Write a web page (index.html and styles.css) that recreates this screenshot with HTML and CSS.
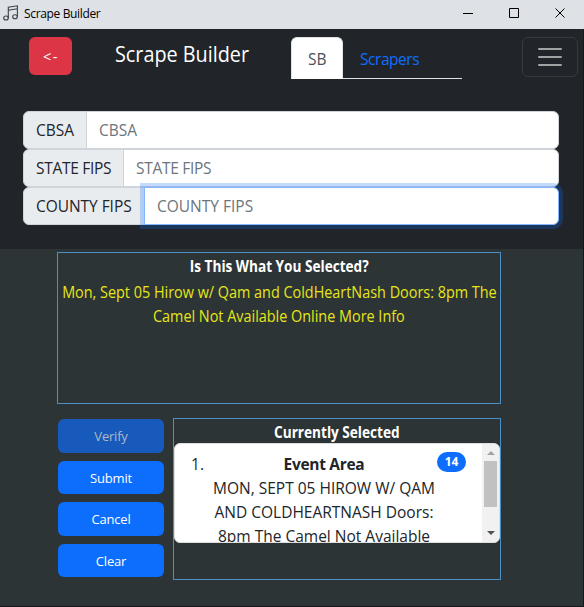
FILE: index.html
```html
<!DOCTYPE html>
<html lang="en">
<head>
<meta charset="utf-8">
<title>Scrape Builder</title>
<link rel="stylesheet" href="styles.css">
</head>
<body>
<div class="window">
  <header class="titlebar">
    <svg class="app-icon" width="16" height="16" viewBox="0 0 16 16" fill="none" stroke="#3c4043" stroke-width="1.1"><ellipse cx="3" cy="13" rx="2.3" ry="2"/><ellipse cx="12" cy="11.8" rx="2.3" ry="2"/><path d="M5.3 13V2.2L14.4.8v11M5.3 5.2l9.1-1.5"/></svg>
    <span class="app-name">Scrape Builder</span>
    <svg class="controls" width="104" height="11" viewBox="0 0 104 11" fill="none" stroke="#000"><path d="M0 5.5h10M46.500 .5h9v9h-9zM92.500 .5l9 9M101.500 .5l-9 9"/></svg>
  </header>
  <nav class="navbar">
    <button class="back"><span>&lt;-</span></button>
    <h1 class="brand"><span>Scrape Builder</span></h1>
    <div class="tabs"><a class="tab active"><span>SB</span></a><a class="tab scrapers"><span>Scrapers</span></a></div>
    <button class="toggler" aria-label="Menu"><svg width="30" height="30" viewBox="0 0 30 30" stroke="#a1a2a3" stroke-width="2" stroke-linecap="round"><path d="M4 7h22M4 15h22M4 23h22"/></svg></button>
  </nav>
  <form class="fields">
    <div class="group"><label class="cbsa">CBSA</label><div class="input">CBSA</div></div>
    <div class="group"><label class="state">STATE FIPS</label><div class="input state-input">STATE FIPS</div></div>
    <div class="group"><label class="county">COUNTY FIPS</label><div class="input focused">COUNTY FIPS</div></div>
  </form>
  <main class="content">
    <section class="preview">
      <h2><span class="question">Is This What You Selected?</span></h2>
      <p><span class="line">Mon, Sept 05 Hirow w/ Qam and ColdHeartNash Doors: 8pm The</span></p>
      <p><span class="line">Camel Not Available Online More Info</span></p>
    </section>
    <div class="lower">
      <div class="actions">
        <button disabled>Verify</button>
        <button>Submit</button>
        <button>Cancel</button>
        <button>Clear</button>
      </div>
      <section class="selected">
        <h2><span class="question">Currently Selected</span></h2>
        <div class="list">
          <div class="number">1.</div>
          <div class="item">
            <div class="item-title">Event Area</div>
            <div>MON, SEPT 05 HIROW W/ QAM</div>
            <div>AND COLDHEARTNASH Doors:</div>
            <div>8pm The Camel Not Available</div>
          </div>
          <div class="badge">14</div>
          <div class="scrollbar"><i class="up"></i><i class="thumb"></i><i class="down"></i></div>
        </div>
      </section>
    </div>
  </main>
</div>
</body>
</html>
```
FILE: styles.css
```css
* { box-sizing: border-box; }
body { margin: 0; background: #15181a; font: 15.5px/24px "Open Sans", "Noto Sans", sans-serif; color: #212529; }
span, label { white-space: nowrap; }
h1, h2, p { margin: 0; font-weight: 400; }
button { font: inherit; padding: 0; border: 0; border-radius: 6px; display: flex; align-items: center; justify-content: center; }
.window { width: 583px; height: 606px; background: #2d3436; }
.titlebar { width: 584px; height: 29px; background: #dee1e6; display: flex; align-items: center; padding: 0 17px 0 3px; }
.app-icon { margin-top: -3px; }
.app-name { margin-left: 5px; flex: 1; color: #000; font-size: 12px; line-height: 16px; letter-spacing: -.35px; margin-top: -2px; }
.controls { margin-top: -2px; width: 104px; }
.navbar { height: 82px; background: #212529; padding: 8px 5px 0 29px; display: flex; align-items: flex-start; }
.back { width: 43px; height: 38px; background: #dc3545; color: #fff; font-size: 14.5px; letter-spacing: 1.5px; padding: 2px 0 0 1px; }
.brand { width: 134px; margin-left: 43px; color: #fff; font-size: 22px; line-height: 32px; }
.brand span { display: inline-block; transform: scaleX(.9); transform-origin: left; }
.tabs { width: 171px; height: 42px; margin-left: 42px; display: flex; border-bottom: 1px solid #dee2e6; }
.tab { height: 42px; padding: 9px 16px; border: 1px solid transparent; color: #0d6efd; }
.tab.active { width: 52px; background: #fff; color: #495057; border-color: #dee2e6 #dee2e6 #fff; border-radius: 6px 6px 0 0; }
.scrapers { letter-spacing: -.45px; }
.toggler { width: 56px; height: 40px; margin-left: auto; background: none; border: 1px solid #373b3e; }
.fields { height: 138px; padding: 0 24px 0 23px; background: #212529; }
.group { height: 38px; display: flex; }
.group label { padding: 6px 12px; border: 1px solid #ced4da; background: #e9ecef; border-radius: 6px 0 0 6px; }
.cbsa { width: 64px; }
.state { width: 101px; }
.state, .state-input { letter-spacing: -.3px; }
.county { width: 122px; letter-spacing: -.05px; }
.input { flex: 1; margin-left: -1px; padding: 6px 12px; background: #fff; border: 1px solid #ced4da; border-radius: 0 6px 6px 0; color: #6c757d; }
.input.focused { border-color: #86b7fe; box-shadow: 0 0 0 4px rgba(13, 110, 253, .25); z-index: 1; }
.content { padding: 3px 82px 0 57px; text-align: center; }
.preview { height: 152px; border: 1px solid #4a90c4; color: #e6e619; }
h2 { color: #fff; font-weight: 700; font-size: 16px; line-height: 24px; }
.question { display: inline-block; transform: scaleX(.85); }
.preview h2 { height: 27px; padding-top: 1px; }
.preview p { height: 24px; font-size: 16px; line-height: 24px; }
.line { display: inline-block; margin: 0 -30px; transform: scaleX(.9); }
.lower { display: flex; margin-top: 14px; }
.actions { width: 107px; padding: 1px 0 0 1px; display: grid; grid-template-rows: 34px 33px 34px 33px; gap: 8px 0; align-content: start; }
.actions button { background: #0d6efd; color: #fff; font-size: 13px; line-height: 20px; letter-spacing: -.2px; }
.actions button:disabled { background: #185abc; color: #aeb9c4; }
.selected { width: 328px; height: 162px; margin-left: 9px; border: 1px solid #4a90c4; }
.selected h2 { padding-top: 1px; height: 24px; }
.list { height: 100px; display: flex; overflow: hidden; border: 1px solid #dfdfdf; border-radius: 6px; background: #fff; padding-top: 8px; }
.number { width: 33px; padding-left: 12px; }
.item { width: 232px; }
.item-title { font-weight: 700; letter-spacing: -.3px; }
.badge { width: 29px; height: 20px; margin-left: -3px; border-radius: 10px; background: #0d6efd; color: #fff; font-weight: 700; font-size: 12px; line-height: 20px; }
.scrollbar { width: 17px; height: 98px; margin: -8px 0 0 auto; background: #f1f1f1; display: flex; flex-direction: column; align-items: center; }
.up, .down { border: 4px solid transparent; }
.up { border-top: 0; border-bottom-color: #a3a3a3; margin-top: 7px; }
.thumb { width: 13px; height: 46px; margin-top: 6px; background: #c1c1c1; }
.down { border-bottom: 0; border-top-color: #505050; margin: auto 0 7px; }
```
